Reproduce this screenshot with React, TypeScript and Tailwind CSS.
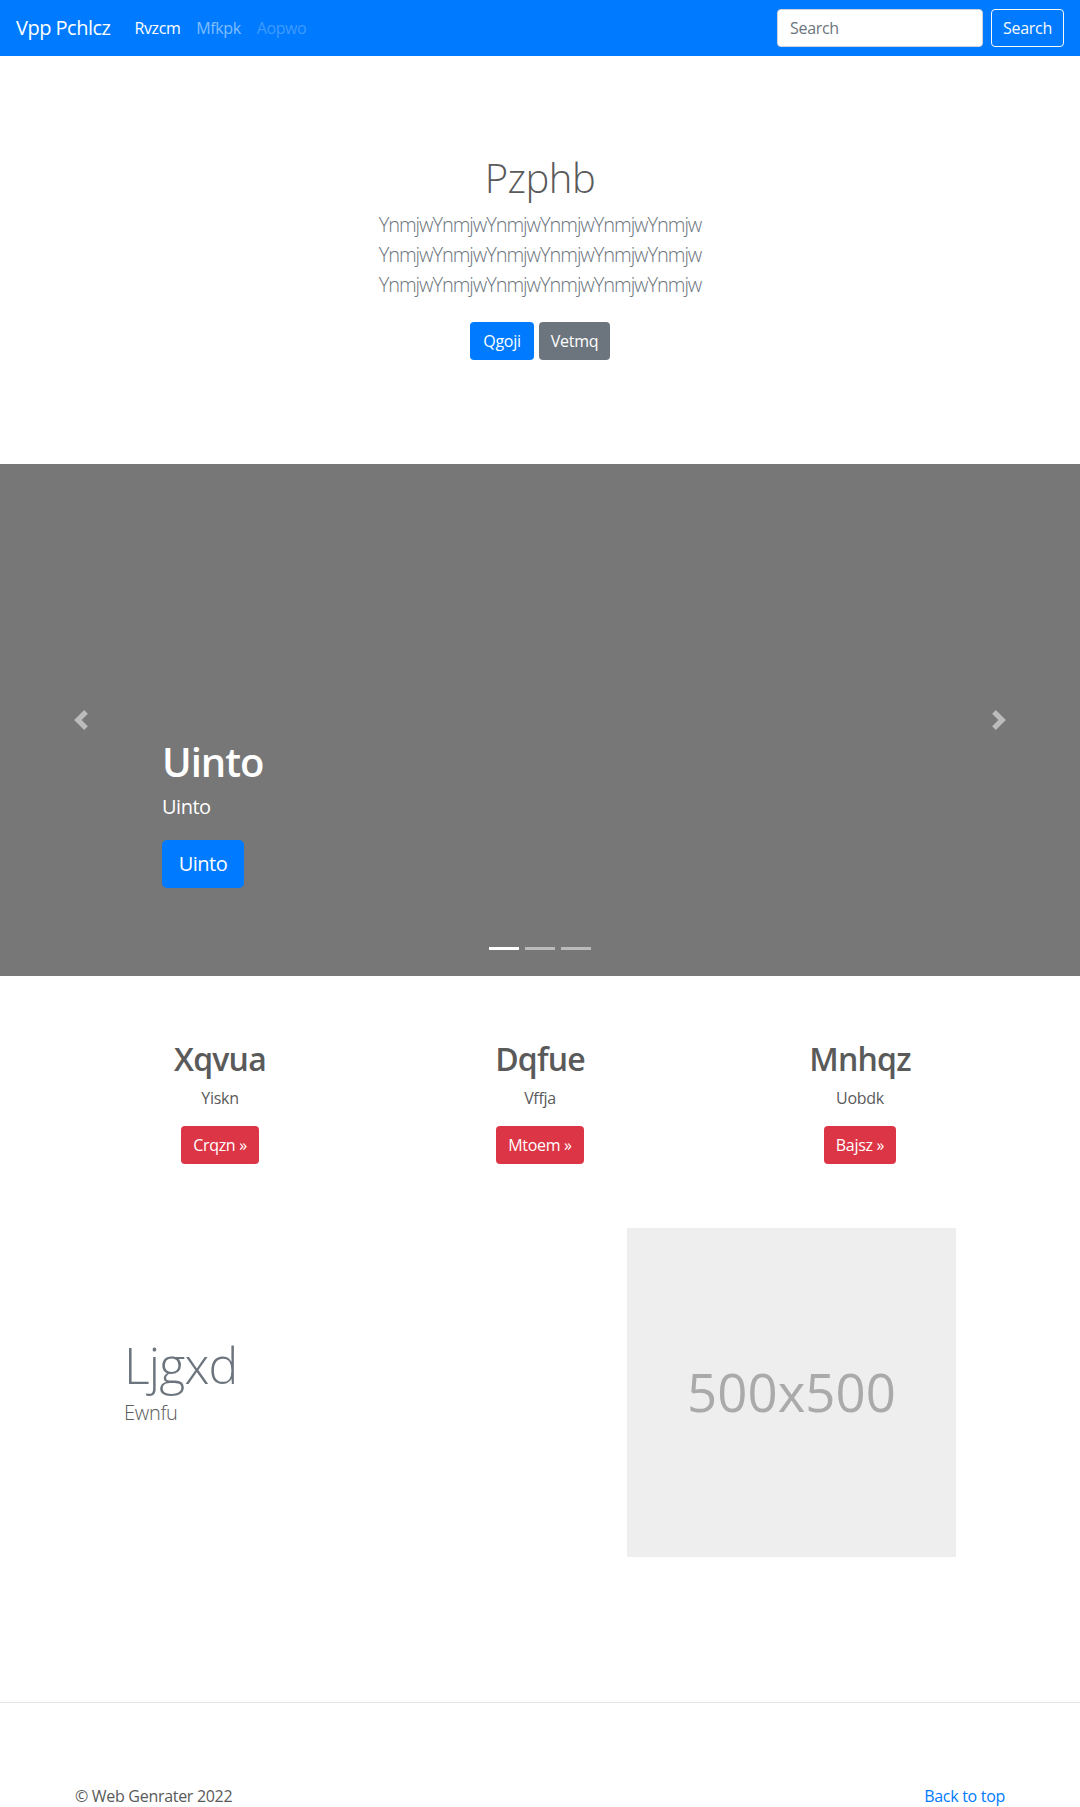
import React from "react";

const font = { fontFamily: '"Open Sans", "Noto Sans", "Liberation Sans", sans-serif' };

function Chevron({ dir }: { dir: "left" | "right" }) {
  return (
    <svg width="20" height="20" viewBox="0 0 8 8" className="opacity-50" fill="#fff">
      {dir === "left" ? (
        <path d="M5.25 0l-4 4 4 4 1.5-1.5L4.25 4l2.5-2.5L5.25 0z" />
      ) : (
        <path d="M2.75 0l-1.5 1.5L3.75 4l-2.5 2.5L2.75 8l4-4-4-4z" />
      )}
    </svg>
  );
}

export default function App() {
  const cols = [
    { h: "Xqvua", p: "Yiskn", b: "Crqzn" },
    { h: "Dqfue", p: "Vffja", b: "Mtoem" },
    { h: "Mnhqz", p: "Uobdk", b: "Bajsz" },
  ];
  return (
    <div className="w-[1080px] bg-white text-[#5a5a5a] tracking-[-0.3px]" style={font}>
      {/* Navbar */}
      <nav className="h-14 bg-[#007bff] px-4 flex items-center">
        <span className="text-[20px] leading-[30px] text-white mr-4 tracking-[-0.5px]">Vpp Pchlcz</span>
        <ul className="flex items-center text-base tracking-[-0.4px]">
          <li className="px-2 text-white">Rvzcm</li>
          <li className="px-2 text-white/50">Mfkpk</li>
          <li className="px-2 text-white/25">Aopwo</li>
        </ul>
        <div className="ml-auto flex items-center gap-2">
          <input
            placeholder="Search"
            className="w-[206px] h-[38px] rounded-[4px] border border-[#ced4da] bg-white px-3 text-base text-[#495057] placeholder:text-[#6c757d] outline-none tracking-[-0.3px]"
            style={font}
          />
          <button className="h-[38px] w-[73px] rounded-[4px] border border-[#f8f9fa] text-[#f8f9fa] text-base">
            Search
          </button>
        </div>
      </nav>

      {/* Hero */}
      <section className="h-[408px] pt-[98px] flex flex-col items-center text-center">
        <h1 className="text-[40px] leading-[48px] font-light text-[#5a5a5a] tracking-[-0.5px]">Pzphb</h1>
        <p className="mt-2 text-[20px] leading-[30px] font-light text-[#6c757d] tracking-[-1.05px]">
          <span className="block">YnmjwYnmjwYnmjwYnmjwYnmjwYnmjw</span>
          <span className="block">YnmjwYnmjwYnmjwYnmjwYnmjwYnmjw</span>
          <span className="block">YnmjwYnmjwYnmjwYnmjwYnmjwYnmjw</span>
        </p>
        <div className="mt-[22px] flex gap-[5px]">
          <button className="h-[38px] w-[64px] rounded-[4px] bg-[#007bff] text-white text-base">Qgoji</button>
          <button className="h-[38px] w-[71px] rounded-[4px] bg-[#6c757d] text-white text-base">Vetmq</button>
        </div>
      </section>

      {/* Carousel */}
      <div className="relative h-[512px] bg-[#777777]">
        <div className="absolute left-0 top-0 bottom-0 w-[15%] flex items-center justify-center">
          <Chevron dir="left" />
        </div>
        <div className="absolute right-0 top-0 bottom-0 w-[15%] flex items-center justify-center">
          <Chevron dir="right" />
        </div>
        <div className="absolute left-[15%] right-[15%] top-[274px] flex flex-col items-start text-white">
          <h1 className="text-[40px] leading-[48px] font-semibold tracking-[-1px]">Uinto</h1>
          <p className="mt-[6px] text-[20px] leading-[30px] tracking-[-0.5px]">Uinto</p>
          <button className="mt-[18px] h-12 w-[82px] rounded-[5px] bg-[#007bff] text-white text-[20px] tracking-[-0.5px]">Uinto</button>
        </div>
        <div className="absolute left-0 right-0 bottom-[26px] flex justify-center gap-[6px]">
          <span className="w-[30px] h-[3px] bg-white" />
          <span className="w-[30px] h-[3px] bg-white/50" />
          <span className="w-[30px] h-[3px] bg-white/50" />
        </div>
      </div>

      {/* Marketing */}
      <div className="w-[960px] mx-auto mt-16 grid grid-cols-3">
        {cols.map((c) => (
          <div key={c.h} className="flex flex-col items-center text-center">
            <h2 className="text-[32px] leading-[38px] font-semibold text-[#5a5a5a] tracking-[-0.8px]">{c.h}</h2>
            <p className="mt-2 text-base leading-6">{c.p}</p>
            <button className="mt-4 h-[38px] px-3 rounded-[4px] bg-[#dc3545] text-white text-base">
              {c.b} »
            </button>
          </div>
        ))}
      </div>

      {/* Featurette */}
      <div className="w-[832px] mx-auto mt-16 grid grid-cols-[473px_329px] gap-[30px]">
        <div>
          <h2 className="mt-[112px] text-[50px] leading-none font-light tracking-[-0.05rem] text-[#6c757d]">Ljgxd</h2>
          <p className="mt-2 text-[20px] leading-[30px] font-light text-[#5a5a5a]">Ewnfu</p>
        </div>
        <div className="w-[329px] h-[329px] bg-[#eeeeee] flex items-center justify-center">
          <span className="text-[52.8px] text-[#aaaaaa] leading-none tracking-normal">500x500</span>
        </div>
      </div>

      {/* Footer */}
      <hr className="mt-[145px] border-0 border-t border-[#e5e5e5]" />
      <footer className="w-[930px] mx-auto mt-[81px] flex justify-between text-base leading-6 pb-12">
        <p>© Web Genrater 2022</p>
        <a className="text-[#007bff]">Back to top</a>
      </footer>
    </div>
  );
}
